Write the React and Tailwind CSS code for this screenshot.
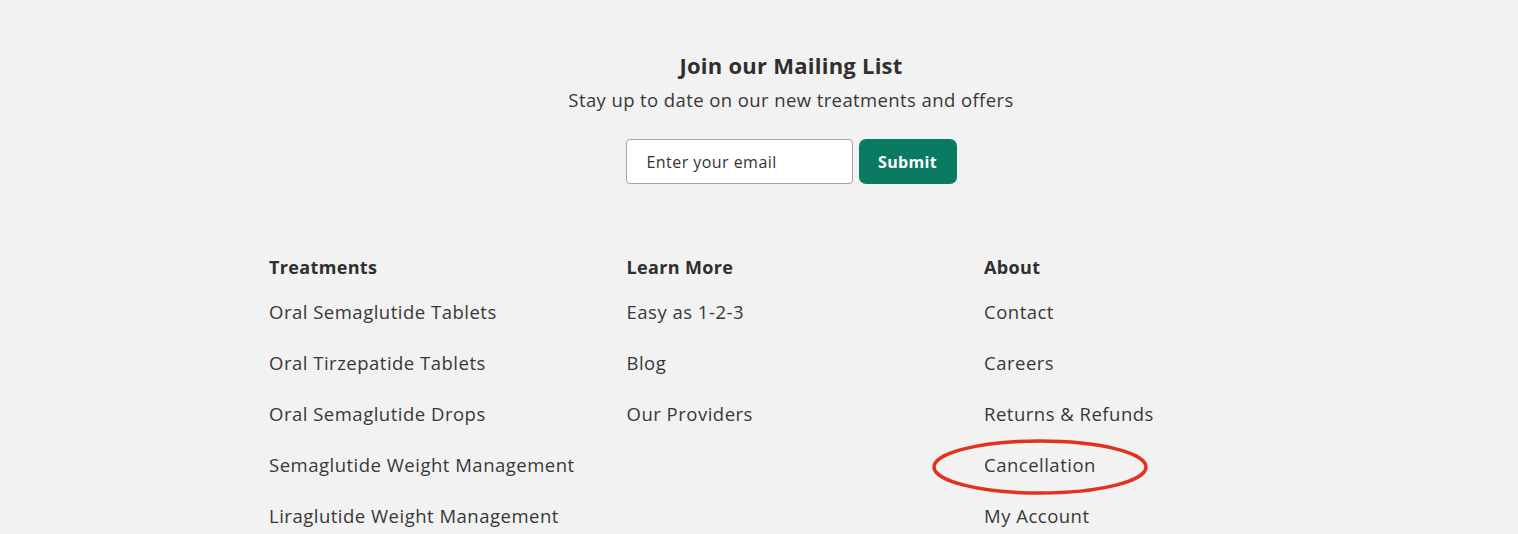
import React from "react";

const columns = [
  {
    title: "Treatments",
    links: [
      "Oral Semaglutide Tablets",
      "Oral Tirzepatide Tablets",
      "Oral Semaglutide Drops",
      "Semaglutide Weight Management",
      "Liraglutide Weight Management",
    ],
  },
  {
    title: "Learn More",
    links: ["Easy as 1-2-3", "Blog", "Our Providers"],
  },
  {
    title: "About",
    links: ["Contact", "Careers", "Returns & Refunds", "Cancellation", "My Account"],
  },
];

const FooterColumn = ({ title, links }) => (
  <div>
    <h6 className="text-[18px] leading-[27px] font-bold tracking-[0.35px] text-[#2f2f2f]">{title}</h6>
    <ul className="mt-[17px] flex flex-col gap-[24px]">
      {links.map((link) => (
        <li key={link}>
          <a href="#" className="text-[18.5px] leading-[27px] tracking-[0.5px] text-[#383838]">
            {link}
          </a>
        </li>
      ))}
    </ul>
  </div>
);

export default function App() {
  return (
    <div
      className="relative h-[534px] overflow-hidden bg-[#f2f2f2]"
      style={{ fontFamily: '"Open Sans", "Liberation Sans", sans-serif' }}
    >
      <div className="ml-[269px] w-[1044px] pt-[50px]">
        {/* MAILING LIST */}
        <div className="flex flex-col items-center">
          <h4 className="text-[22px] leading-[30px] font-bold tracking-[0.25px] text-[#2f2f2f]">
            Join our Mailing List
          </h4>
          <p className="mt-[5.5px] text-[18.5px] leading-[27px] tracking-[0.4px] text-[#383838]">
            Stay up to date on our new treatments and offers
          </p>

          <form className="mt-[26.5px] flex gap-[6px]" onSubmit={(e) => e.preventDefault()}>
            <input
              type="email"
              placeholder="Enter your email"
              className="h-[45px] w-[227px] rounded-[4px] border border-[#a3a3a3] bg-white pl-[20px] text-[16px] tracking-[0.45px] text-[#333] placeholder:text-[#333] outline-none"
            />
            <button className="h-[45px] w-[98px] rounded-[7px] bg-[#0b7a63] text-[16px] font-bold tracking-[0.3px] text-white">
              Submit
            </button>
          </form>
        </div>

        {/* LINK COLUMNS */}
        <div className="mt-[69.5px] grid grid-cols-3 gap-x-[28.5px]">
          {columns.map((col) => (
            <FooterColumn key={col.title} {...col} />
          ))}
        </div>
      </div>

      {/* annotation */}
      <svg
        className="pointer-events-none absolute left-[931px] top-[438px]"
        width="218"
        height="58"
        viewBox="0 0 218 58"
      >
        <ellipse cx="109" cy="29" rx="106" ry="26" fill="none" stroke="#e3311d" strokeWidth="3.5" />
      </svg>
    </div>
  );
}
